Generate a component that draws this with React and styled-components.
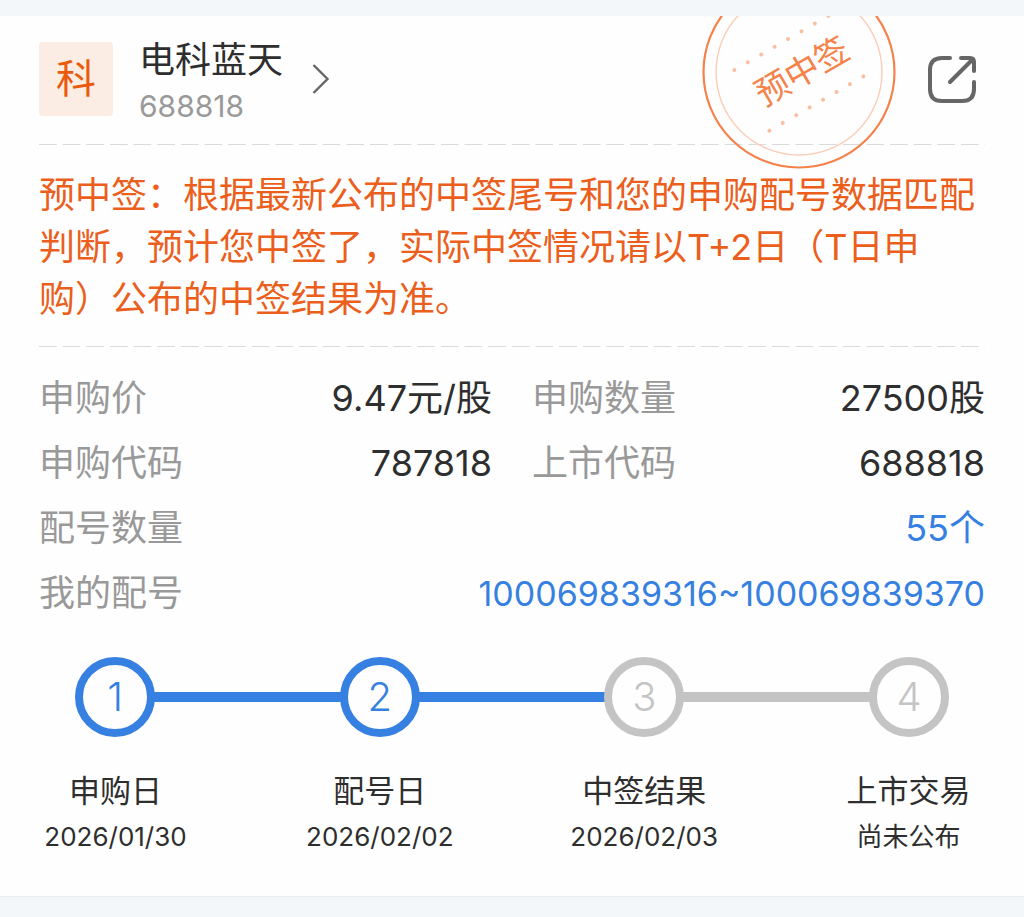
import React from 'react'
import styled, { createGlobalStyle } from 'styled-components'

const colors = {
  page: '#f3f7f9',
  card: '#fefefe',
  edge: '#e9edef',
  text: '#2e2e2e',
  muted: '#999999',
  icon: '#666666',
  dash: '#dadada',
  orange: '#eb5e1c',
  stamp: '#f5824a',
  blue: '#3580e0',
  idle: '#c4c4c4'
}

const GlobalStyle = createGlobalStyle`
  * {
    box-sizing: border-box;
  }
  body {
    margin: 0;
    background: ${colors.page};
    color: ${colors.text};
    font-family: Inter, 'Noto Sans CJK SC', sans-serif;
    text-spacing-trim: space-all;
  }
`

const Page = styled.main`
  padding: 16px 0 20px;
`

const Card = styled.article`
  position: relative;
  overflow: hidden;
  padding: 0 39px 37px;
  background: ${colors.card};
  border-bottom: 1px solid ${colors.edge};
`

const Header = styled.header`
  display: flex;
  align-items: center;
  justify-content: space-between;
  height: 128px;
  padding: 0 9px 2px 0;
`

const StockLink = styled.a`
  display: flex;
  align-items: center;
  color: inherit;
  text-decoration: none;
`

const BoardTag = styled.span`
  display: grid;
  place-items: center;
  width: 74px;
  height: 74px;
  border-radius: 4px;
  background: #fbede4;
  color: #eb5a0c;
  font-size: 40px;
  line-height: 40px;
`

const StockName = styled.h1`
  margin: 0;
  font-size: 36px;
  font-weight: 400;
  line-height: 48px;
`

const StockCode = styled.p`
  margin: 0;
  color: ${colors.muted};
  font-size: 30px;
  line-height: 44px;
`

const StockTitle = styled.div`
  margin: 0 29px 0 26px;
  padding-top: 6px;
`

const ShareButton = styled.button`
  padding: 0;
  border: 0;
  background: none;
  color: ${colors.icon};
  line-height: 0;
  cursor: pointer;
`

const Stamp = styled.svg`
  position: absolute;
  top: -42px;
  right: 127px;
  z-index: 1;
  pointer-events: none;
`

const Divider = styled.hr`
  height: 1px;
  margin: 0;
  border: 0;
  background: linear-gradient(to right, ${colors.dash} 76%, transparent 76%) 0 0 / 2.5% 1px repeat-x;
`

const Notice = styled.p`
  margin: 0;
  padding: 24px 0 21px;
  color: ${colors.orange};
  font-size: 36px;
  line-height: 52px;
`

const Details = styled.dl`
  display: grid;
  grid-template-columns: 1fr 1fr;
  column-gap: 40px;
  margin: 0;
  padding: 19px 0 31px;
`

const Detail = styled.div`
  display: flex;
  justify-content: space-between;
  grid-column: ${p => (p.$wide ? '1 / -1' : 'auto')};
  font-size: 36px;
  line-height: 65px;
`

const Label = styled.dt`
  color: ${colors.muted};
`

const Value = styled.dd`
  margin: 0;
  color: ${p => (p.$active ? colors.blue : colors.text)};
  font-size: ${p => (p.$long ? '34px' : '36px')};
`

const Track = styled.div`
  display: flex;
  align-items: center;
  padding: 0 36px;
`

const Ring = styled.span`
  display: grid;
  place-items: center;
  width: 80px;
  height: 80px;
  border: 8px solid ${p => (p.$done ? colors.blue : colors.idle)};
  border-radius: 50%;
  color: ${p => (p.$done ? colors.blue : colors.idle)};
  font-size: 40px;
  font-weight: 300;
  line-height: 40px;
`

const Connector = styled.span`
  flex: 1;
  height: 10px;
  margin: 0 -1px;
  background: ${p => (p.$done ? colors.blue : colors.idle)};
`

const Captions = styled.ol`
  display: flex;
  justify-content: space-between;
  margin: 0;
  padding: 30px 0 0;
  list-style: none;
`

const Caption = styled.li`
  width: 153px;
  text-align: center;
  white-space: nowrap;
`

const StepName = styled.div`
  font-size: 31px;
  line-height: 48px;
`

const StepDate = styled.div`
  font-size: 26px;
  line-height: 44px;
`

const details = [
  { label: '申购价', value: '9.47元/股' },
  { label: '申购数量', value: '27500股' },
  { label: '申购代码', value: '787818' },
  { label: '上市代码', value: '688818' },
  { label: '配号数量', value: '55个', wide: true },
  { label: '我的配号', value: '100069839316~100069839370', wide: true, long: true }
]

const steps = [
  { name: '申购日', date: '2026/01/30', done: true },
  { name: '配号日', date: '2026/02/02', done: true },
  { name: '中签结果', date: '2026/02/03', done: false },
  { name: '上市交易', date: '尚未公布', done: false }
]

const dots = [0, 1, 2, 3, 4, 5, 6, 7]

const Chevron = () => (
  <svg width='18' height='32' viewBox='0 0 18 32' fill='none' stroke={colors.icon} strokeWidth='2.4' aria-hidden='true'>
    <path d='M1.5 2 15.5 16 1.5 30' />
  </svg>
)

const ShareIcon = () => (
  <svg width='48' height='48' viewBox='0 0 48 48' fill='none' stroke='currentColor' strokeWidth='4' strokeLinecap='round' strokeLinejoin='round' aria-hidden='true'>
    <path d='M22 3H14C6 3 2 7 2 15V34C2 42 6 46 14 46H34C42 46 46 42 46 34V27' />
    <path d='M33 3H42Q46 3 46 7V16' />
    <path d='M22 27 44 5' />
  </svg>
)

const ResultStamp = () => (
  <Stamp width='196' height='196' viewBox='-98 -98 196 196' role='img' aria-label='预中签'>
    <circle r='95.5' fill='none' stroke={colors.stamp} strokeWidth='2.2' />
    <circle r='83' fill='none' stroke='#f9cdb8' strokeWidth='1.4' />
    <g transform='rotate(-30)'>
      {dots.map(i => (
        <circle key={`t${i}`} cx={i * 15.5 - 55} cy='-34' r='2' fill='#f9bfa3' />
      ))}
      {dots.map(i => (
        <circle key={`b${i}`} cx={i * 15.5 - 55} cy='36' r='2' fill='#f9bfa3' />
      ))}
      <text x='3' y='13' textAnchor='middle' fontSize='34' fill={colors.stamp}>预中签</text>
    </g>
  </Stamp>
)

export default function App () {
  return (
    <Page>
      <GlobalStyle />
      <Card>
        <ResultStamp />
        <Header>
          <StockLink href='#stock'>
            <BoardTag>科</BoardTag>
            <StockTitle>
              <StockName>电科蓝天</StockName>
              <StockCode>688818</StockCode>
            </StockTitle>
            <Chevron />
          </StockLink>
          <ShareButton type='button' aria-label='分享'>
            <ShareIcon />
          </ShareButton>
        </Header>
        <Divider />
        <Notice>
          预中签：根据最新公布的中签尾号和您的申购配号数据匹配判断，预计您中签了，实际中签情况请以T+2日（T日申购）公布的中签结果为准。
        </Notice>
        <Divider />
        <Details>
          {details.map(item => (
            <Detail key={item.label} $wide={item.wide}>
              <Label>{item.label}</Label>
              <Value $active={item.wide} $long={item.long}>{item.value}</Value>
            </Detail>
          ))}
        </Details>
        <Track>
          {steps.map((step, index) => (
            <React.Fragment key={step.name}>
              {index > 0 && <Connector $done={steps[index - 1].done} />}
              <Ring $done={step.done}>{index + 1}</Ring>
            </React.Fragment>
          ))}
        </Track>
        <Captions>
          {steps.map(step => (
            <Caption key={step.name}>
              <StepName>{step.name}</StepName>
              <StepDate>{step.date}</StepDate>
            </Caption>
          ))}
        </Captions>
      </Card>
    </Page>
  )
}
